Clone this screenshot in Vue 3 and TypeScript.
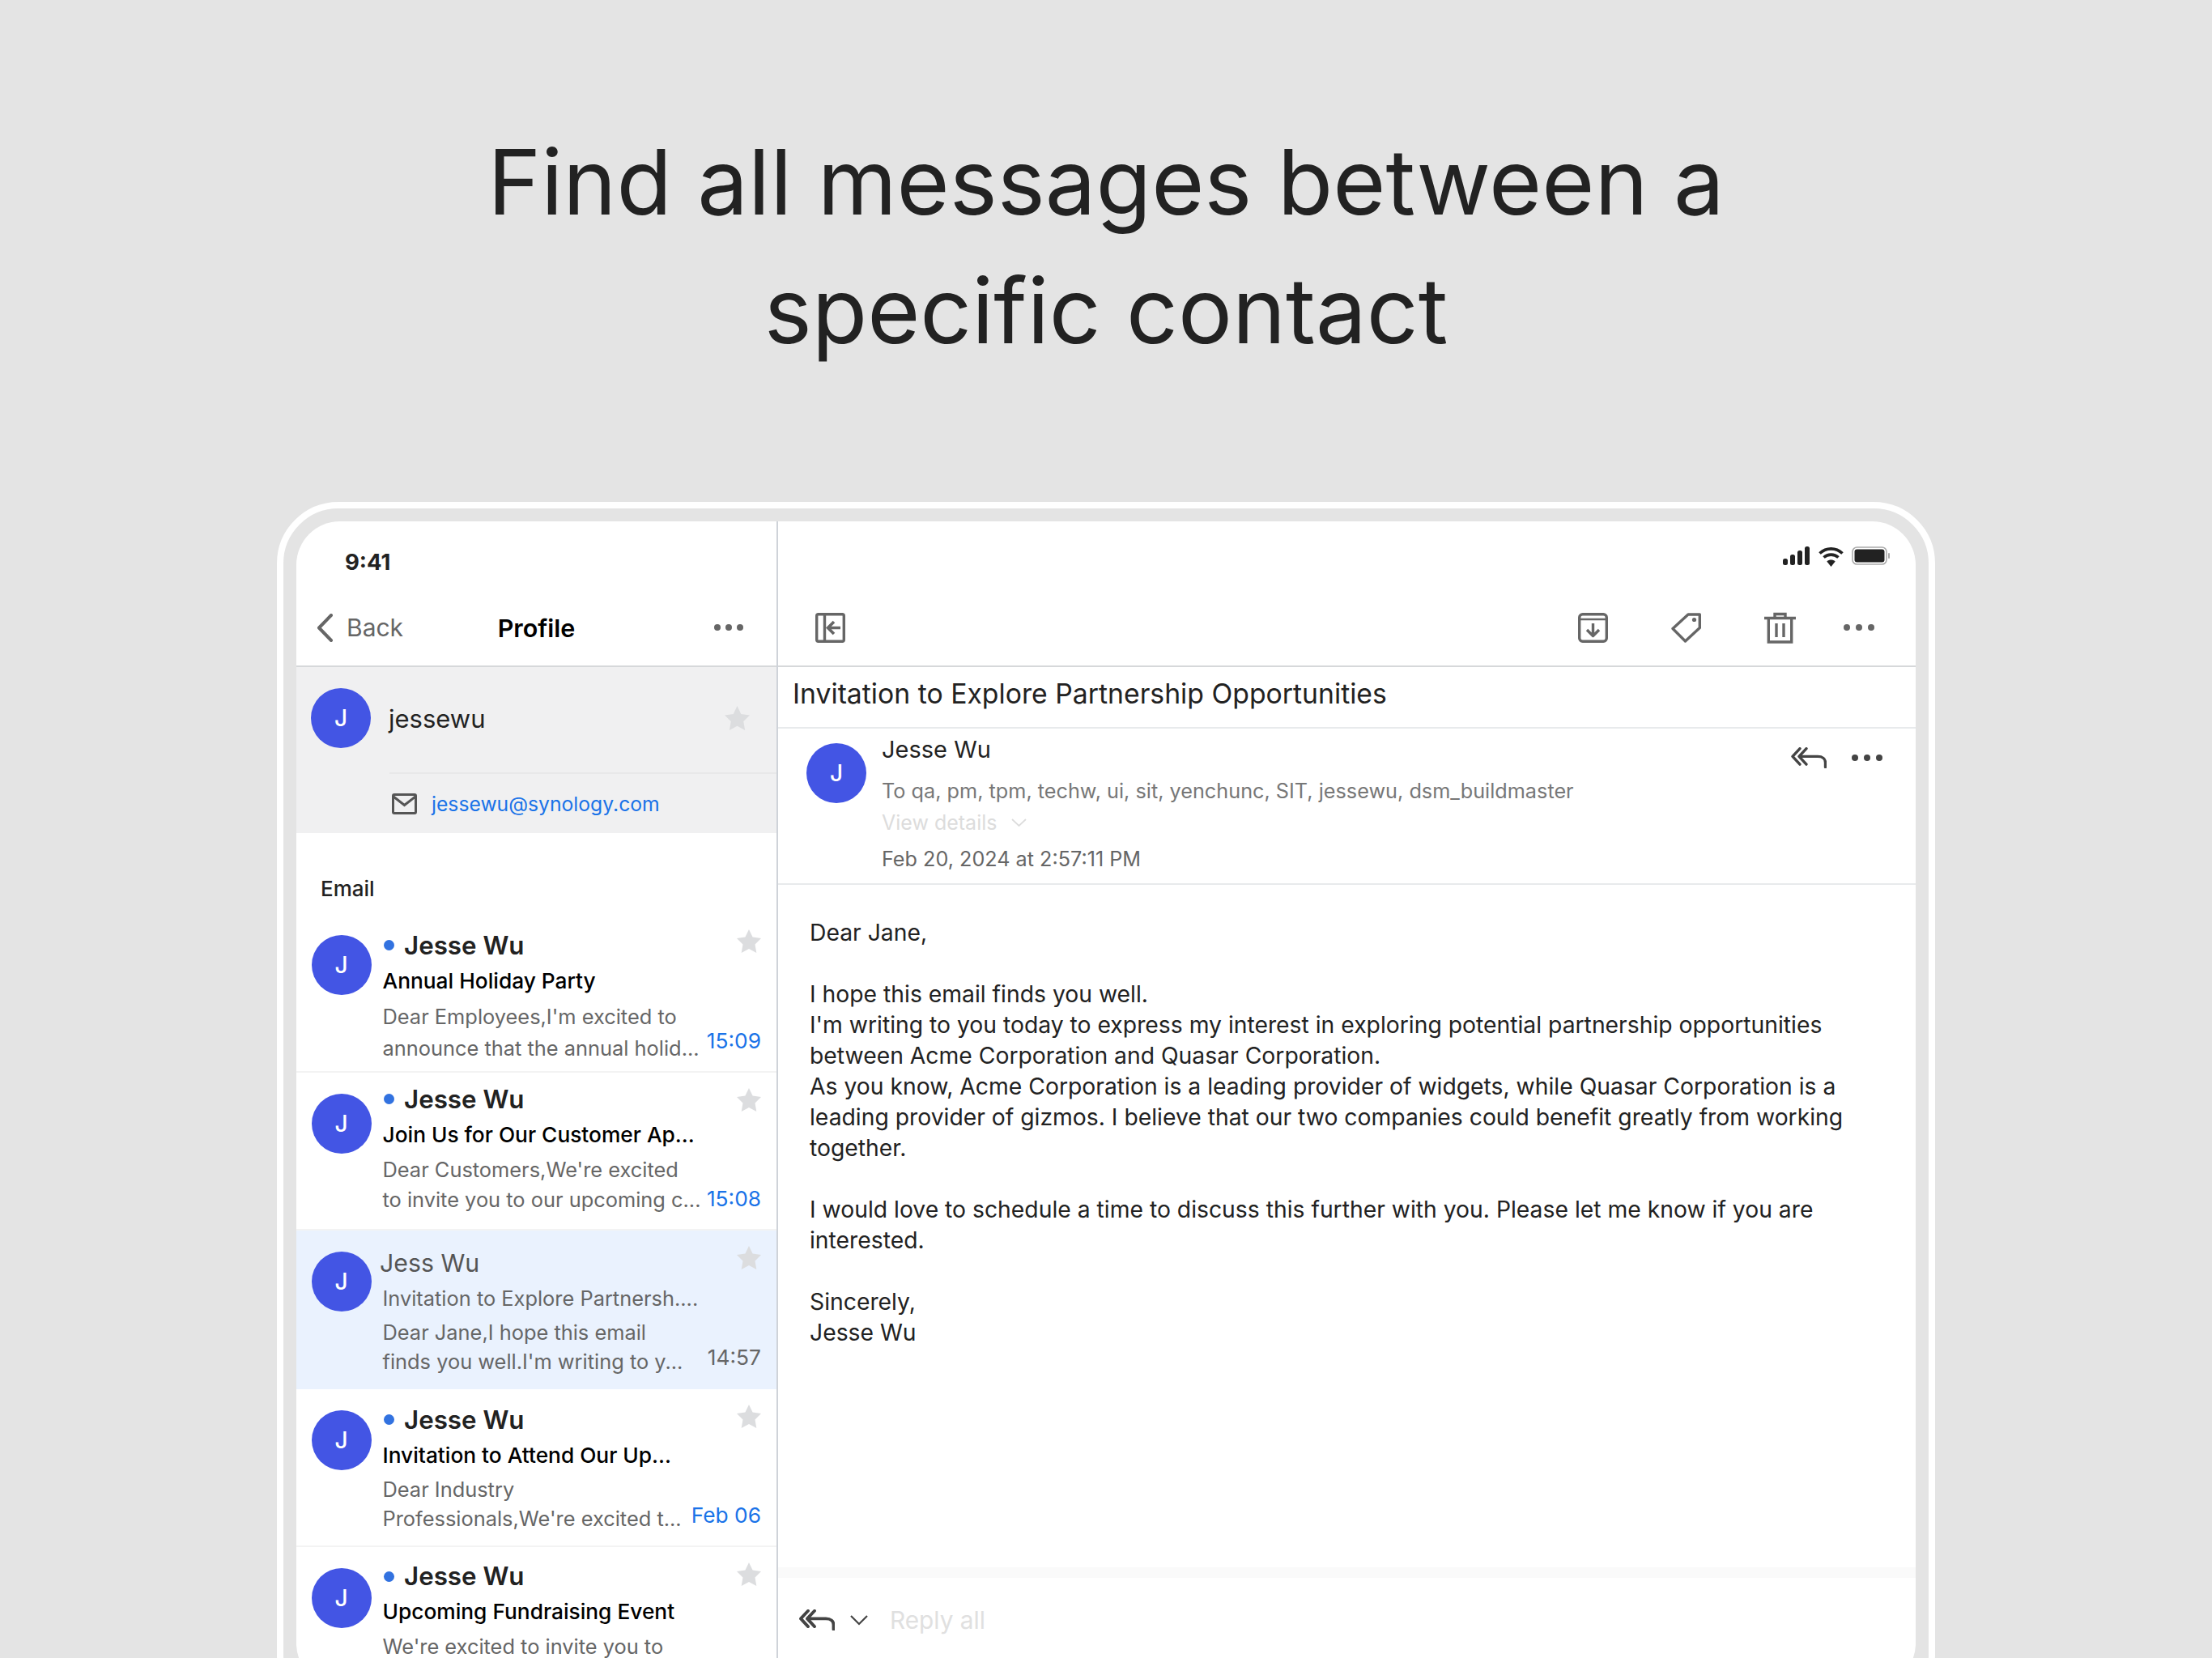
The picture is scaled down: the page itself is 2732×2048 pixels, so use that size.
<script setup lang="ts">
interface Message {
  name: string
  subject: string
  lines: string[]
  time: string
  unread: boolean
  nameY: number
  lineHeight: number
}

const messages: Message[] = [
  { name: 'Jesse Wu', subject: 'Annual Holiday Party', lines: ["Dear Employees,I'm excited to", 'announce that the annual holid...'], time: '15:09', unread: true, nameY: 38.5, lineHeight: 39 },
  { name: 'Jesse Wu', subject: 'Join Us for Our Customer Ap...', lines: ["Dear Customers,We're excited", 'to invite you to our upcoming c...'], time: '15:08', unread: true, nameY: 33, lineHeight: 37 },
  { name: 'Jess Wu', subject: 'Invitation to Explore Partnersh....', lines: ['Dear Jane,I hope this email', "finds you well.I'm writing to y..."], time: '14:57', unread: false, nameY: 39.5, lineHeight: 36 },
  { name: 'Jesse Wu', subject: 'Invitation to Attend Our Up...', lines: ['Dear Industry', "Professionals,We're excited t..."], time: 'Feb 06', unread: true, nameY: 38, lineHeight: 36 },
  { name: 'Jesse Wu', subject: 'Upcoming Fundraising Event', lines: ["We're excited to invite you to"], time: '', unread: true, nameY: 36, lineHeight: 37 },
]

const starPoints = '15,0 19.6,9.6 30,11 22.5,18.4 24.3,29 15,24 5.7,29 7.5,18.4 0,11 10.4,9.6'
</script>

<template>
  <div class="page">
    <h1>Find all messages between a<br />specific contact</h1>

    <div class="frame">
      <div class="screen">
        <aside class="side">
          <div class="clock">9:41</div>
          <div class="nav">
            <div class="back">
              <svg width="20" height="35" viewBox="0 0 20 35" fill="none">
                <path d="M18 2 3 17.5 18 33" stroke="#666" stroke-width="4" stroke-linecap="round" stroke-linejoin="round" />
              </svg>
              <span>Back</span>
            </div>
            <strong>Profile</strong>
            <div class="dots"><i></i><i></i><i></i></div>
          </div>

          <section class="contact">
            <div class="contact-top">
              <div class="avatar">J</div>
              <span class="contact-name">jessewu</span>
              <svg class="contact-star" width="31" height="30" viewBox="0 0 30 29"><polygon :points="starPoints" fill="#dcdddf" /></svg>
            </div>
            <div class="contact-mail">
              <svg width="31" height="26" viewBox="0 0 31 26" fill="none" stroke="#555" stroke-width="3">
                <rect x="1.5" y="1.5" width="28" height="23" rx="1.5" />
                <path d="M2 4 15.5 14.5 29 4" />
              </svg>
              <span>jessewu@synology.com</span>
            </div>
          </section>

          <div class="label">Email</div>

          <article
            v-for="(m, i) in messages"
            :key="i"
            class="row"
            :class="{ selected: !m.unread }"
          >
            <div class="avatar">J</div>
            <div class="row-text" :style="{ paddingTop: m.nameY - 22 + 'px' }">
              <div class="row-name">
                <span v-if="m.unread" class="dot"></span>{{ m.name }}
              </div>
              <div class="row-subject">{{ m.subject }}</div>
              <div class="row-preview" :style="{ lineHeight: m.lineHeight + 'px' }">
                <div v-for="l in m.lines" :key="l">{{ l }}</div>
              </div>
            </div>
            <div class="row-aside">
              <svg width="30" height="29" viewBox="0 0 30 29"><polygon :points="starPoints" fill="#dcdddf" /></svg>
              <span class="row-time">{{ m.time }}</span>
            </div>
          </article>
        </aside>

        <main class="pane">
          <div class="status">
            <svg width="34" height="23" viewBox="0 0 34 23" fill="#222">
              <rect x="0" y="15" width="6" height="8" rx="2.5" />
              <rect x="9" y="10" width="6" height="13" rx="2.5" />
              <rect x="18" y="5" width="6" height="18" rx="2.5" />
              <rect x="27" y="0" width="6" height="23" rx="2.5" />
            </svg>
            <svg width="31" height="25" viewBox="0 0 31 25" fill="none" stroke="#222" stroke-width="3.6">
              <path d="M1.5 8.5C9.5 1 21.5 1 29.5 8.5" />
              <path d="M6.5 13.5C11.5 9 19.5 9 24.5 13.5" />
              <path d="M15.5 25 10.3 18.5C13.3 15.9 17.7 15.9 20.7 18.5Z" fill="#222" stroke="none" />
            </svg>
            <svg width="48" height="23" viewBox="0 0 48 23">
              <rect x="1" y="1" width="42" height="21" rx="5.5" fill="none" stroke="#aaa" stroke-width="1.6" />
              <rect x="3.500" y="3.500" width="37" height="16" rx="3" fill="#222" />
              <rect x="45" y="8" width="2" height="7" rx="1" fill="#aaa" />
            </svg>
          </div>

          <div class="toolbar">
            <svg width="37" height="37" viewBox="0 0 37 37" fill="none" stroke="#666" stroke-width="3.4">
              <rect x="1.7" y="1.7" width="33.6" height="33.6" rx="2" />
              <path d="M11.5 2v33" />
              <path d="M31 18.5H16M23 11l-7.5 7.5L23 26" stroke-width="3.6" />
            </svg>
            <div class="tools">
              <svg width="37" height="37" viewBox="0 0 37 37" fill="none" stroke="#666" stroke-width="3.4" stroke-linejoin="round">
                <rect x="1.7" y="1.7" width="33.6" height="33.6" rx="4" />
                <path d="M2 8h33" stroke-width="2.4" />
                <path d="M18.5 13v15M11 21l7.5 7.5L26 21" />
              </svg>
              <svg width="37" height="37" viewBox="0 0 37 37" fill="none" stroke="#666" stroke-width="3.4" stroke-linejoin="round">
                <path d="M21 2h14.300v16.500L17.500 35 2 19.500Z" />
                <circle cx="28.500" cy="8.500" r="2.600" fill="#666" stroke="none" />
              </svg>
              <svg width="39" height="39" viewBox="0 0 39 39" fill="none" stroke="#666" stroke-width="3.4">
                <path d="M0 7.500h39M13 7V2.500h13V7M5.300 8v29h28.400V8" />
                <path d="M15 14v17M24 14v17" />
              </svg>
              <div class="dots wide"><i></i><i></i><i></i></div>
            </div>
          </div>

          <div class="title">Invitation to Explore Partnership Opportunities</div>

          <div class="sender">
            <div class="avatar">J</div>
            <div class="sender-text">
              <div class="sender-name">Jesse Wu</div>
              <div class="sender-to">To qa, pm, tpm, techw, ui, sit, yenchunc, SIT, jessewu, dsm_buildmaster</div>
              <div class="sender-view">
                View details
                <svg width="19" height="10" viewBox="0 0 19 10" fill="none" stroke="#dcdcdc" stroke-width="1.8"><path d="M1 1l8.500 8L18 1" /></svg>
              </div>
              <div class="sender-date">Feb 20, 2024 at 2:57:11 PM</div>
            </div>
            <div class="sender-actions">
              <svg width="44" height="26" viewBox="0 0 44 26" fill="none" stroke="#444" stroke-width="3.4" stroke-linecap="round" stroke-linejoin="round">
                <path d="M11 1.700 2 11.400l9 9.700M19 1.700 10 11.400l9 9.700M11.500 11.400H33c6 0 9.500 3 9.500 7.600v5.500" />
              </svg>
              <div class="dots wide dark"><i></i><i></i><i></i></div>
            </div>
          </div>

          <div class="body">
            <p>Dear Jane,</p>
            <p>I hope this email finds you well.<br />I'm writing to you today to express my interest in exploring potential partnership opportunities between Acme Corporation and Quasar Corporation.<br />As you know, Acme Corporation is a leading provider of widgets, while Quasar Corporation is a leading provider of gizmos. I believe that our two companies could benefit greatly from working together.</p>
            <p>I would love to schedule a time to discuss this further with you. Please let me know if you are interested.</p>
            <p>Sincerely,<br />Jesse Wu</p>
          </div>

          <div class="band"></div>

          <div class="reply">
            <svg width="44" height="26" viewBox="0 0 44 26" fill="none" stroke="#444" stroke-width="3.800" stroke-linecap="round" stroke-linejoin="round">
              <path d="M11 1.700 2 11.400l9 9.700M19 1.700 10 11.400l9 9.700M11.500 11.400H33c6 0 9.500 3 9.500 7.600v5.500" />
            </svg>
            <svg class="reply-caret" width="22" height="13" viewBox="0 0 22 13" fill="none" stroke="#444" stroke-width="2.200"><path d="M1 1l10 10L21 1" /></svg>
            <span>Reply all</span>
          </div>
        </main>
      </div>
    </div>
  </div>
</template>

<style>
html,
body {
  margin: 0;
  background: #e4e4e4;
}
</style>

<style scoped>
.page {
  width: 2732px;
  height: 2048px;
  overflow: hidden;
  background: #e4e4e4;
  font-family: Inter, "Liberation Sans", sans-serif;
  color: #222;
}

h1 {
  margin: 0;
  padding-top: 145px;
  height: 620px;
  box-sizing: border-box;
  text-align: center;
  font-size: 111.800px;
  font-weight: 400;
  line-height: 159px;
  color: #222;
}

.frame {
  width: 2048px;
  height: 1500px;
  margin: 0 auto;
  box-sizing: border-box;
  border: 8px solid #fff;
  border-radius: 76px;
  padding: 16px;
}

.screen {
  display: flex;
  height: 1440px;
  overflow: hidden;
  background: #fff;
  border-radius: 54px;
}

.side {
  flex: none;
  width: 595px;
  box-sizing: border-box;
  border-right: 2px solid #cfd3d9;
}

.clock {
  height: 98px;
  padding-left: 60px;
  box-sizing: border-box;
  font-size: 27.500px;
  font-weight: 700;
  line-height: 100px;
}

.nav {
  display: grid;
  grid-template-columns: 1fr auto 1fr;
  align-items: center;
  height: 66px;
  padding: 0 41px 14px;
  border-bottom: 2px solid #d6d8da;
}

.nav strong {
  font-size: 30.500px;
  font-weight: 600;
  color: #000;
}

.back {
  display: flex;
  align-items: center;
  gap: 17px;
  margin-left: -16px;
  font-size: 30px;
  color: #666;
}

.dots {
  display: flex;
  justify-content: flex-end;
  gap: 6px;
}

.dots i {
  width: 8px;
  height: 8px;
  border-radius: 50%;
  background: #666;
}

.dots.wide {
  gap: 7px;
}

.dots.dark i {
  background: #444;
}

.avatar {
  flex: none;
  width: 74px;
  height: 74px;
  border-radius: 50%;
  background: #4355e4;
  color: #fff;
  font-size: 28px;
  font-weight: 500;
  line-height: 74px;
  text-align: center;
}

.contact {
  height: 205px;
  background: #f0f0f1;
}

.contact-top {
  display: flex;
  align-items: center;
  height: 130px;
  padding: 27px 33px 0 18px;
  box-sizing: border-box;
  gap: 22px;
  border-bottom: 2px solid transparent;
}

.contact-top .avatar {
  margin-bottom: 29px;
}

.contact-name {
  margin-bottom: 29px;
  font-size: 31px;
}

.contact-star {
  margin-left: auto;
  margin-bottom: 29px;
}

.contact-mail {
  display: flex;
  align-items: center;
  gap: 18px;
  height: 73px;
  margin-left: 115px;
  padding-left: 3px;
  border-top: 2px solid #e8e8e9;
  font-size: 24.700px;
  color: #1a73e8;
}

.label {
  height: 100px;
  box-sizing: border-box;
  padding: 51.5px 0 0 30px;
  font-size: 26px;
  font-weight: 500;
  line-height: 34px;
}

.row {
  display: flex;
  height: 195.5px;
  box-sizing: border-box;
  padding-left: 18.5px;
  border-bottom: 2px solid #f3f3f3;
}

.row > .avatar {
  margin-top: 26px;
}

.row.selected {
  background: #eaf2fe;
  border-bottom-color: #eaf2fe;
}

.row-text {
  flex: 1;
  min-width: 0;
  padding-left: 14px;
  white-space: nowrap;
}

.row-name {
  display: flex;
  align-items: center;
  height: 44px;
  font-size: 31.300px;
  font-weight: 600;
}

.dot {
  width: 13px;
  height: 13px;
  margin: 0 12px 0 1.5px;
  border-radius: 50%;
  background: #3272e0;
}

.selected .row-name {
  margin-left: -3.5px;
  font-size: 30.300px;
  font-weight: 400;
  color: #555;
}

.row-subject {
  height: 44px;
  font-size: 26.300px;
  font-weight: 500;
  line-height: 44px;
  color: #000;
}

.selected .row-subject {
  font-size: 25.400px;
  font-weight: 400;
  color: #666;
}

.row-preview {
  margin-top: 2px;
  font-size: 25.400px;
  color: #666;
}

.row-aside {
  flex: none;
  display: flex;
  flex-direction: column;
  align-items: flex-end;
  justify-content: space-between;
  box-sizing: border-box;
  padding: 19px 19px 19px 0;
}

.row-time {
  font-size: 26.300px;
  line-height: 36px;
  color: #1a73e8;
}

.selected .row-time {
  color: #666;
}

.pane {
  flex: 1;
  min-width: 0;
  display: flex;
  flex-direction: column;
}

.status {
  display: flex;
  justify-content: flex-end;
  gap: 10px;
  height: 98px;
  box-sizing: border-box;
  padding: 31px 31px 0 0;
}

.toolbar {
  display: flex;
  align-items: center;
  justify-content: space-between;
  height: 66px;
  padding: 0 51px 14px 46px;
  border-bottom: 2px solid #d6d8da;
}

.tools {
  display: flex;
  align-items: center;
  gap: 78px;
}

.tools .dots {
  margin-left: -19px;
}

.title {
  height: 74px;
  box-sizing: content-box;
  padding-left: 18px;
  font-size: 33.750px;
  line-height: 66px;
  border-bottom: 2px solid #e8eaec;
}

.sender {
  display: flex;
  flex: none;
  height: 193px;
  box-sizing: border-box;
  padding: 6px 41px 0 35px;
  border-bottom: 2px solid #e8eaec;
}

.sender > .avatar {
  margin: 12px 19px 0 0;
}

.sender-text {
  flex: 1;
  min-width: 0;
}

.sender-name {
  font-size: 29px;
  line-height: 40px;
}

.sender-to {
  margin-top: 13px;
  font-size: 25.250px;
  line-height: 36px;
  color: #777;
}

.sender-view {
  display: flex;
  align-items: center;
  gap: 18px;
  margin-top: 3px;
  font-size: 25px;
  line-height: 36px;
  color: #dcdcdc;
}

.sender-date {
  margin-top: 9px;
  font-size: 25.200px;
  line-height: 36px;
  color: #666;
}

.sender-actions {
  display: flex;
  align-items: center;
  align-self: flex-start;
  gap: 31px;
  margin-top: 17px;
}

.body {
  flex: none;
  height: 843px;
  box-sizing: border-box;
  padding: 40px 0 0 39px;
  width: 1340px;
  font-size: 28.300px;
  line-height: 38px;
  color: #222;
}

.body p {
  margin: 0 0 38px;
}

.band {
  flex: none;
  height: 13px;
  background: #fafafa;
}

.reply {
  display: flex;
  align-items: center;
  height: 104px;
  padding-left: 26px;
  font-size: 29.800px;
  color: #e0e0e0;
}

.reply-caret {
  margin: 0 27px 0 19px;
}
</style>
